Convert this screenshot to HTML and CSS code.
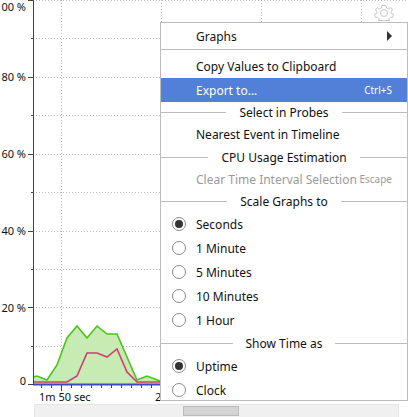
FILE: index.html
```html
<!DOCTYPE html>
<html lang="en">
<head>
    <meta charset="UTF-8">
    <meta name="viewport" content="width=device-width, initial-scale=1.0">
    <title>CPU Load</title>
    <link rel="stylesheet" href="styles.css">
</head>
<body>
    <div class="graph">
        <svg class="plot" width="408" height="404" viewBox="0 0 408 404">
            <!-- grid -->
            <path class="grid" d="M33 0.5H408M33 38.5H408M33 77.5H408M33 115.5H408M33 154.5H408M33 192.5H408M33 231.5H408M33 269.5H408M33 307.5H408M33 346.5H408"/>
            <path class="grid" d="M61.5 0V384M161.5 0V384M261.5 0V22M361.5 0V22"/>

            <!-- data -->
            <path class="area" d="M33 377L37 376L47 380L57 365L67 338L77 326L87 338L97 326L107 334L117 334L127 357L137 380L147 376L160 381V384H33Z"/>
            <path class="line-green" d="M33 377L37 376L47 380L57 365L67 338L77 326L87 338L97 326L107 334L117 334L127 357L137 380L147 376L160 381"/>
            <path class="line-red" d="M33 382H67L77 376L87 353L97 353L107 357L117 349L127 372L137 382H160"/>
            <path class="line-blue" d="M33 384.5H160"/>

            <!-- axes -->
            <path class="axis" d="M33.5 0V385M28 0.5H33M28 77.5H33M28 154.5H33M28 231.5H33M28 307.5H33M28 384.5H33"/>
            <path class="tick" d="M31 38.5H33M31 115.5H33M31 192.5H33M31 269.5H33M31 346.5H33"/>
            <path class="tick" d="M41.5 385V388M51.5 385V388M71.5 385V388M81.5 385V388M91.5 385V388M101.5 385V388M111.5 385V388M121.5 385V388M131.5 385V388M141.5 385V388M151.5 385V388"/>
            <path class="axis" d="M61.5 385V391"/>

            <text class="label" x="26" y="11" text-anchor="end">100 %</text>
            <text class="label" x="26" y="81" text-anchor="end">80 %</text>
            <text class="label" x="26" y="158" text-anchor="end">60 %</text>
            <text class="label" x="26" y="235" text-anchor="end">40 %</text>
            <text class="label" x="26" y="312" text-anchor="end">20 %</text>
            <text class="label" x="26" y="385" text-anchor="end">0</text>
            <text class="label" x="39" y="401">1m 50 sec</text>
            <text class="label" x="155" y="401">2</text>

            <!-- settings gear -->
            <g class="gear">
                <path d="M382 5.5H386L386.6 8L388.6 8.8L390.7 7.5L392.5 10L391 12L391.3 13.4L393.5 14.3L392.6 17.4L390.3 17.2L389 18.7L389.4 20.5H378.6L379 18.7L377.7 17.2L375.4 17.4L374.5 14.3L376.7 13.4L377 12L375.5 10L377.3 7.5L379.4 8.8L381.4 8Z"/>
                <circle cx="384" cy="13" r="3.5"/>
            </g>
        </svg>

        <div class="scrollbar">
            <div class="scroll-thumb"></div>
        </div>
    </div>

    <div class="menu">
        <div class="item item-first">
            <span>Graphs</span>
            <span class="arrow"></span>
        </div>
        <div class="separator"></div>
        <div class="item"><span>Copy Values to Clipboard</span></div>
        <div class="item active">
            <span>Export to...</span>
            <span class="shortcut">Ctrl+S</span>
        </div>
        <div class="heading heading-tight"><span>Select in Probes</span></div>
        <div class="item"><span>Nearest Event in Timeline</span></div>
        <div class="heading"><span>CPU Usage Estimation</span></div>
        <div class="item item-short disabled">
            <span>Clear Time Interval Selection</span>
            <span class="shortcut">Escape</span>
        </div>
        <div class="heading"><span>Scale Graphs to</span></div>
        <div class="item radio checked"><span>Seconds</span></div>
        <div class="item radio"><span>1 Minute</span></div>
        <div class="item radio"><span>5 Minutes</span></div>
        <div class="item radio"><span>10 Minutes</span></div>
        <div class="item radio"><span>1 Hour</span></div>
        <div class="heading"><span>Show Time as</span></div>
        <div class="item radio checked"><span>Uptime</span></div>
        <div class="item radio"><span>Clock</span></div>
    </div>
</body>
</html>
```

FILE: styles.css
```css
html, body {
    margin: 0;
    padding: 0;
    height: 417px;
    overflow: hidden;
    background-color: #fff;
    font-family: "Noto Sans", Arial, sans-serif;
    font-size: 12px;
    color: #111;
}
.graph {
    display: flex;
    flex-direction: column;
}
.plot {
    display: block;
}
.grid {
    fill: none;
    stroke: #bdbdbd;
    stroke-width: 1;
    stroke-dasharray: 1 2;
}
.area {
    fill: #c6ecb4;
}
.line-green {
    fill: none;
    stroke: #4cc21a;
    stroke-width: 1.6;
}
.line-red {
    fill: none;
    stroke: #d6396f;
    stroke-width: 1.6;
}
.line-blue {
    fill: none;
    stroke: #3c4bc0;
    stroke-width: 2;
}
.axis {
    fill: none;
    stroke: #444;
    stroke-width: 1;
}
.tick {
    fill: none;
    stroke: #444;
    stroke-width: 1;
}
.label {
    font-size: 11px;
    fill: #111;
}
.gear path, .gear circle {
    fill: #fff;
    stroke: #c8c8c8;
    stroke-width: 1;
}
.scrollbar {
    margin-left: 34px;
    width: 363px;
    height: 11px;
    padding-top: 1px;
    background-color: #f0f0f0;
    border: 1px solid #e6e6e6;
}
.scroll-thumb {
    margin-left: 148px;
    width: 54px;
    height: 8px;
    background-color: #d4d4d4;
    border: 1px solid #bbb;
}

/* popup menu */
.menu {
    position: absolute;
    left: 160px;
    top: 22px;
    width: 246px;
    height: 377px;
    background-color: #fff;
    border: 1px solid #bcbcbc;
}
.item {
    display: flex;
    align-items: center;
    justify-content: space-between;
    height: 24px;
    padding: 0 15px 0 35px;
}
.item-first {
    margin-top: 1px;
}
.item-short {
    height: 22px;
}
.active {
    background-color: #5280d8;
    color: #fff;
}
.disabled {
    color: #9a9a9a;
}
.shortcut {
    font-size: 10px;
}
.arrow {
    width: 0;
    height: 0;
    border-top: 5px solid transparent;
    border-bottom: 5px solid transparent;
    border-left: 5px solid #333;
}
.separator {
    height: 1px;
    margin: 1px 0 4px;
    background-color: #bcbcbc;
}
.heading {
    display: flex;
    align-items: center;
    gap: 13px;
    height: 22px;
}
.heading-tight {
    height: 20px;
}
.heading::before, .heading::after {
    content: "";
    flex: 1;
    height: 1px;
    background-color: #bcbcbc;
}
.radio {
    position: relative;
}
.radio::before {
    content: "";
    position: absolute;
    left: 11px;
    top: 5px;
    width: 12px;
    height: 12px;
    border: 1px solid #8c8c8c;
    border-radius: 50%;
    background-color: #fff;
}
.checked::after {
    content: "";
    position: absolute;
    left: 14px;
    top: 8px;
    width: 8px;
    height: 8px;
    border-radius: 50%;
    background-color: #333;
}
```
